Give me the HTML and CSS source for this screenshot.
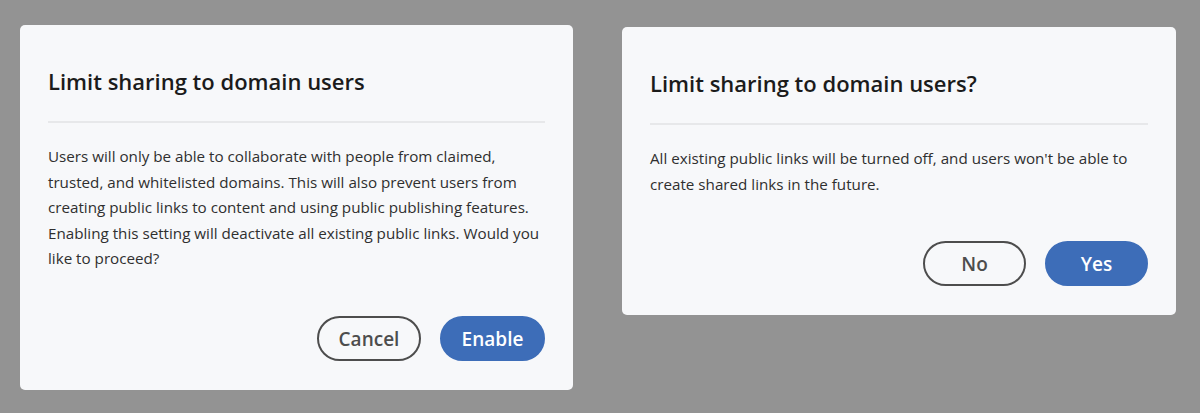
FILE: index.html
```html
<!DOCTYPE html>
<html lang="en">
<head>
<meta charset="utf-8">
<title>Limit sharing dialogs</title>
<link rel="stylesheet" href="styles.css">
</head>
<body>
<main class="stage">
  <section class="dialog dialog-long">
    <h2 class="dialog-title">Limit sharing to domain users</h2>
    <hr class="dialog-divider">
    <p class="dialog-body">Users will only be able to collaborate with people from claimed,<br>trusted, and whitelisted domains. This will also prevent users from<br>creating public links to content and using public publishing features.<br>Enabling this setting will deactivate all existing public links. Would you<br>like to proceed?</p>
    <div class="dialog-actions">
      <button class="btn btn-secondary" type="button">Cancel</button>
      <button class="btn btn-primary" type="button">Enable</button>
    </div>
  </section>
  <section class="dialog dialog-short">
    <h2 class="dialog-title">Limit sharing to domain users?</h2>
    <hr class="dialog-divider">
    <p class="dialog-body">All existing public links will be turned off, and users won't be able to<br>create shared links in the future.</p>
    <div class="dialog-actions">
      <button class="btn btn-secondary" type="button">No</button>
      <button class="btn btn-primary" type="button">Yes</button>
    </div>
  </section>
</main>
</body>
</html>
```
FILE: styles.css
```css
html, body {
  margin: 0;
  padding: 0;
}
body {
  width: 1200px;
  height: 413px;
  background: #939393;
  font-family: "Open Sans", "Noto Sans", sans-serif;
  overflow: hidden;
}
.stage {
  display: flex;
  align-items: flex-start;
  gap: 49px;
  padding: 25px 0 0 20px;
}
.dialog {
  box-sizing: border-box;
  background: #f7f8fa;
  border-radius: 5px;
  padding: 42px 28px 29px 28px;
  display: flex;
  flex-direction: column;
}
.dialog-long {
  width: 553px;
  height: 365px;
}
.dialog-short {
  width: 554px;
  height: 288px;
  margin-top: 2px;
}
.dialog-title {
  margin: 0;
  font-size: 22px;
  line-height: 28px;
  font-weight: 600;
  color: #1b1b1b;
  letter-spacing: 0;
}
.dialog-divider {
  margin: 26px 0 0 0;
  border: 0;
  height: 2px;
  background: #e7e8ea;
}
.dialog-body {
  margin: 21px 0 0 0;
  font-size: 15.2px;
  line-height: 25.5px;
  color: #2f2f2f;
  letter-spacing: 0;
}
.dialog-actions {
  margin-top: auto;
  display: flex;
  justify-content: flex-end;
  gap: 19px;
}
.btn {
  box-sizing: border-box;
  height: 45px;
  border-radius: 23px;
  font-family: inherit;
  font-size: 19px;
  font-weight: 600;
  padding: 0;
  cursor: pointer;
}
.btn-secondary {
  width: 104px;
  background: transparent;
  border: 2px solid #4d4d4d;
  color: #4d4d4d;
}
.btn-primary {
  width: 105px;
  background: #3d6db8;
  border: 2px solid #3d6db8;
  color: #ffffff;
}
.dialog-short .btn-secondary {
  width: 103px;
}
.dialog-short .btn-primary {
  width: 103px;
}
```
